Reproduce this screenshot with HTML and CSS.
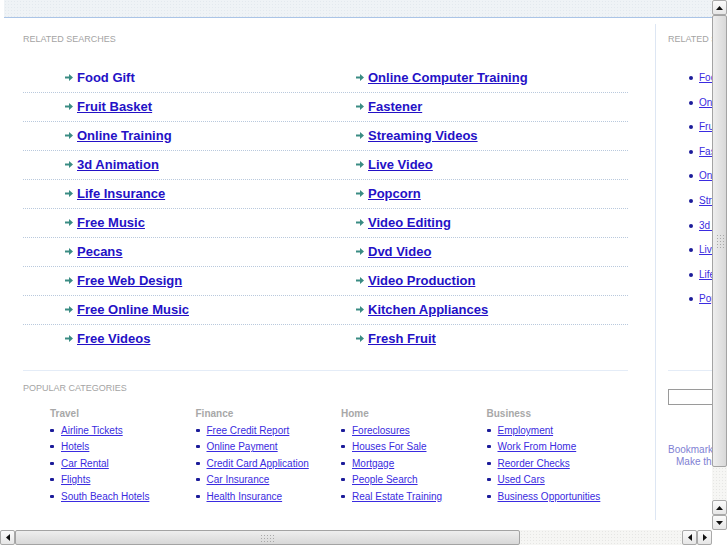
FILE: index.html
```html
<!DOCTYPE html>
<html lang="en">
<head>
    <meta charset="UTF-8">
    <title>Related Searches</title>
    <link rel="stylesheet" href="styles.css">
</head>
<body>
    <div class="window">
        <!-- Area visivel da pagina -->
        <div class="viewport">
            <div class="page">
                <div class="topbar"></div>

                <div class="content">
                    <!-- Coluna principal -->
                    <div class="main">
                        <div class="section-title">RELATED SEARCHES</div>

                        <div class="searches">
                            <div class="search-row">
                                <a class="search-item plain" href="#"><svg class="arrow" viewBox="0 0 8 7"><path d="M0 2.5h4V0l4 3.5L4 7V4.5H0z"/></svg><span>Food Gift</span></a>
                                <a class="search-item" href="#"><svg class="arrow" viewBox="0 0 8 7"><path d="M0 2.5h4V0l4 3.5L4 7V4.5H0z"/></svg><span>Online Computer Training</span></a>
                            </div>
                            <div class="search-row">
                                <a class="search-item" href="#"><svg class="arrow" viewBox="0 0 8 7"><path d="M0 2.5h4V0l4 3.5L4 7V4.5H0z"/></svg><span>Fruit Basket</span></a>
                                <a class="search-item" href="#"><svg class="arrow" viewBox="0 0 8 7"><path d="M0 2.5h4V0l4 3.5L4 7V4.5H0z"/></svg><span>Fastener</span></a>
                            </div>
                            <div class="search-row">
                                <a class="search-item" href="#"><svg class="arrow" viewBox="0 0 8 7"><path d="M0 2.5h4V0l4 3.5L4 7V4.5H0z"/></svg><span>Online Training</span></a>
                                <a class="search-item" href="#"><svg class="arrow" viewBox="0 0 8 7"><path d="M0 2.5h4V0l4 3.5L4 7V4.5H0z"/></svg><span>Streaming Videos</span></a>
                            </div>
                            <div class="search-row">
                                <a class="search-item" href="#"><svg class="arrow" viewBox="0 0 8 7"><path d="M0 2.5h4V0l4 3.5L4 7V4.5H0z"/></svg><span>3d Animation</span></a>
                                <a class="search-item" href="#"><svg class="arrow" viewBox="0 0 8 7"><path d="M0 2.5h4V0l4 3.5L4 7V4.5H0z"/></svg><span>Live Video</span></a>
                            </div>
                            <div class="search-row">
                                <a class="search-item" href="#"><svg class="arrow" viewBox="0 0 8 7"><path d="M0 2.5h4V0l4 3.5L4 7V4.5H0z"/></svg><span>Life Insurance</span></a>
                                <a class="search-item" href="#"><svg class="arrow" viewBox="0 0 8 7"><path d="M0 2.5h4V0l4 3.5L4 7V4.5H0z"/></svg><span>Popcorn</span></a>
                            </div>
                            <div class="search-row">
                                <a class="search-item" href="#"><svg class="arrow" viewBox="0 0 8 7"><path d="M0 2.5h4V0l4 3.5L4 7V4.5H0z"/></svg><span>Free Music</span></a>
                                <a class="search-item" href="#"><svg class="arrow" viewBox="0 0 8 7"><path d="M0 2.5h4V0l4 3.5L4 7V4.5H0z"/></svg><span>Video Editing</span></a>
                            </div>
                            <div class="search-row">
                                <a class="search-item" href="#"><svg class="arrow" viewBox="0 0 8 7"><path d="M0 2.5h4V0l4 3.5L4 7V4.5H0z"/></svg><span>Pecans</span></a>
                                <a class="search-item" href="#"><svg class="arrow" viewBox="0 0 8 7"><path d="M0 2.5h4V0l4 3.5L4 7V4.5H0z"/></svg><span>Dvd Video</span></a>
                            </div>
                            <div class="search-row">
                                <a class="search-item" href="#"><svg class="arrow" viewBox="0 0 8 7"><path d="M0 2.5h4V0l4 3.5L4 7V4.5H0z"/></svg><span>Free Web Design</span></a>
                                <a class="search-item" href="#"><svg class="arrow" viewBox="0 0 8 7"><path d="M0 2.5h4V0l4 3.5L4 7V4.5H0z"/></svg><span>Video Production</span></a>
                            </div>
                            <div class="search-row">
                                <a class="search-item" href="#"><svg class="arrow" viewBox="0 0 8 7"><path d="M0 2.5h4V0l4 3.5L4 7V4.5H0z"/></svg><span>Free Online Music</span></a>
                                <a class="search-item" href="#"><svg class="arrow" viewBox="0 0 8 7"><path d="M0 2.5h4V0l4 3.5L4 7V4.5H0z"/></svg><span>Kitchen Appliances</span></a>
                            </div>
                            <div class="search-row">
                                <a class="search-item" href="#"><svg class="arrow" viewBox="0 0 8 7"><path d="M0 2.5h4V0l4 3.5L4 7V4.5H0z"/></svg><span>Free Videos</span></a>
                                <a class="search-item" href="#"><svg class="arrow" viewBox="0 0 8 7"><path d="M0 2.5h4V0l4 3.5L4 7V4.5H0z"/></svg><span>Fresh Fruit</span></a>
                            </div>
                        </div>

                        <div class="divider"></div>

                        <div class="section-title">POPULAR CATEGORIES</div>

                        <div class="categories">
                            <div class="category">
                                <div class="category-title">Travel</div>
                                <a class="cat-link" href="#">Airline Tickets</a>
                                <a class="cat-link" href="#">Hotels</a>
                                <a class="cat-link" href="#">Car Rental</a>
                                <a class="cat-link" href="#">Flights</a>
                                <a class="cat-link" href="#">South Beach Hotels</a>
                            </div>
                            <div class="category">
                                <div class="category-title">Finance</div>
                                <a class="cat-link" href="#">Free Credit Report</a>
                                <a class="cat-link" href="#">Online Payment</a>
                                <a class="cat-link" href="#">Credit Card Application</a>
                                <a class="cat-link" href="#">Car Insurance</a>
                                <a class="cat-link" href="#">Health Insurance</a>
                            </div>
                            <div class="category">
                                <div class="category-title">Home</div>
                                <a class="cat-link" href="#">Foreclosures</a>
                                <a class="cat-link" href="#">Houses For Sale</a>
                                <a class="cat-link" href="#">Mortgage</a>
                                <a class="cat-link" href="#">People Search</a>
                                <a class="cat-link" href="#">Real Estate Training</a>
                            </div>
                            <div class="category">
                                <div class="category-title">Business</div>
                                <a class="cat-link" href="#">Employment</a>
                                <a class="cat-link" href="#">Work From Home</a>
                                <a class="cat-link" href="#">Reorder Checks</a>
                                <a class="cat-link" href="#">Used Cars</a>
                                <a class="cat-link" href="#">Business Opportunities</a>
                            </div>
                        </div>
                    </div>

                    <!-- Coluna lateral -->
                    <div class="side">
                        <div class="section-title">RELATED SEARCHES</div>
                        <div class="side-list">
                            <a class="side-link" href="#">Food Gift</a>
                            <a class="side-link" href="#">Online Computer Training</a>
                            <a class="side-link" href="#">Fruit Basket</a>
                            <a class="side-link" href="#">Fastener</a>
                            <a class="side-link" href="#">Online Training</a>
                            <a class="side-link" href="#">Streaming Videos</a>
                            <a class="side-link" href="#">3d Animation</a>
                            <a class="side-link" href="#">Live Video</a>
                            <a class="side-link" href="#">Life Insurance</a>
                            <a class="side-link" href="#">Popcorn</a>
                        </div>
                        <div class="side-divider"></div>
                        <input class="search-box" type="text">
                        <div class="side-note">
                            <a href="#">Bookmark this page</a>
                            <a class="indent" href="#">Make this your Homepage</a>
                        </div>
                    </div>
                </div>
            </div>
        </div>

        <!-- Barra de rolagem vertical -->
        <div class="vscroll">
            <div class="sb-btn"><svg viewBox="0 0 7 4"><path d="M0 4L3.5 0L7 4z"/></svg></div>
            <div class="sb-thumb v"><div class="grip"></div></div>
            <div class="sb-track"></div>
            <div class="sb-btn"><svg viewBox="0 0 7 4"><path d="M0 4L3.5 0L7 4z"/></svg></div>
            <div class="sb-btn"><svg viewBox="0 0 7 4"><path d="M0 0L3.5 4L7 0z"/></svg></div>
        </div>

        <!-- Barra de rolagem horizontal -->
        <div class="hscroll">
            <div class="sb-btn"><svg class="tall" viewBox="0 0 4 7"><path d="M4 0L0 3.5L4 7z"/></svg></div>
            <div class="sb-thumb h"><div class="grip"></div></div>
            <div class="sb-track"></div>
            <div class="sb-btn"><svg class="tall" viewBox="0 0 4 7"><path d="M4 0L0 3.5L4 7z"/></svg></div>
            <div class="sb-btn"><svg class="tall" viewBox="0 0 4 7"><path d="M0 0L4 3.5L0 7z"/></svg></div>
        </div>
        <div class="corner"></div>
    </div>
</body>
</html>
```

FILE: styles.css
```css
html, body {
    margin: 0;
    padding: 0;
    width: 727px;
    height: 545px;
    overflow: hidden;
    background: #ffffff;
    font-family: "Liberation Sans", Arial, sans-serif;
}

.window {
    display: grid;
    grid-template-columns: 712px 15px;
    grid-template-rows: 530px 15px;
}

.viewport {
    overflow: hidden;
    background: #ffffff;
}

.page {
    width: 940px;
}

/* Faixa do topo */
.topbar {
    margin-left: 4px;
    height: 17px;
    background-color: #eff3f6;
    background-image: radial-gradient(#e3e9ee 0.6px, transparent 0.8px);
    background-size: 3px 3px;
    border-bottom: 1px solid #aac4e6;
}

.content {
    display: flex;
    align-items: flex-start;
    padding-top: 6px;
}

.main {
    width: 605px;
    padding-left: 23px;
    padding-top: 10px;
}

.section-title {
    font-size: 9px;
    line-height: 11px;
    color: #a4a4a4;
    white-space: nowrap;
}

/* Lista de buscas relacionadas */
.searches {
    margin-top: 19px;
}

.search-row {
    display: grid;
    grid-template-columns: 291px 1fr;
    padding-left: 42px;
    height: 28px;
    border-bottom: 1px dotted #b9c9dd;
}

.search-row:last-child {
    border-bottom: none;
}

.search-item {
    display: flex;
    align-items: center;
    gap: 4px;
    padding-bottom: 2px;
    font-size: 13px;
    font-weight: bold;
    color: #2411c6;
    text-decoration: none;
    white-space: nowrap;
}

.search-item span {
    color: #2411c6;
    text-decoration: underline;
}

.search-item.plain span {
    text-decoration: none;
}

.arrow {
    width: 8px;
    height: 7px;
    fill: #3a8c83;
}

.divider {
    margin-top: 17px;
    border-top: 1px solid #e4ecf7;
    margin-bottom: 12px;
}

/* Categorias populares */
.categories {
    display: grid;
    grid-template-columns: repeat(4, 145.5px);
    padding-left: 27px;
    margin-top: 13px;
}

.category {
    display: flex;
    flex-direction: column;
}

.category-title {
    font-size: 10px;
    font-weight: bold;
    line-height: 14px;
    color: #a8a8a8;
    margin-bottom: 2px;
}

.cat-link {
    font-size: 10px;
    line-height: 16.4px;
    color: #3a2be0;
    white-space: nowrap;
}

.cat-link::before {
    content: "";
    display: inline-block;
    width: 4px;
    height: 3px;
    margin-right: 7px;
    vertical-align: 2px;
    background: #1c1c9a;
    border-radius: 1px;
}

/* Coluna lateral */
.side {
    margin-left: 27px;
    width: 240px;
    min-height: 496px;
    border-left: 1px solid #dde6f3;
    padding-left: 12px;
    padding-top: 10px;
    box-sizing: border-box;
}

.side-list {
    display: flex;
    flex-direction: column;
    margin-top: 21px;
    padding-left: 21px;
}

.side-link {
    font-size: 10px;
    line-height: 24.6px;
    color: #3a2be0;
    white-space: nowrap;
}

.side-link::before {
    content: "";
    display: inline-block;
    width: 4px;
    height: 4px;
    margin-right: 6px;
    vertical-align: 1px;
    background: #1c1c9a;
    border-radius: 2px;
}

.side-divider {
    margin-top: 58px;
    border-top: 1px solid #e4ecf7;
}

.search-box {
    display: block;
    margin: 18px 0 0 0;
    width: 160px;
    height: 16px;
    box-sizing: border-box;
    border: 1px solid #9a9a9a;
    padding: 0;
}

.side-note {
    display: flex;
    flex-direction: column;
    margin-top: 39px;
}

.side-note a {
    font-size: 10px;
    line-height: 12px;
    color: #7f7fd4;
    text-decoration: none;
    white-space: nowrap;
}

.side-note .indent {
    padding-left: 8px;
}

/* Barras de rolagem */
.vscroll {
    display: flex;
    flex-direction: column;
    background: #f4f4f2;
}

.hscroll {
    display: flex;
    background: #f4f4f2;
}

.corner {
    background: #ffffff;
}

.sb-btn {
    flex: none;
    width: 15px;
    height: 15px;
    box-sizing: border-box;
    border: 1px solid #a9a9a9;
    border-radius: 2px;
    background: linear-gradient(#fbfbfb, #e6e6e6);
    display: flex;
    align-items: center;
    justify-content: center;
}

.sb-btn svg {
    width: 7px;
    height: 4px;
    fill: #111111;
}

.sb-btn svg.tall {
    width: 4px;
    height: 7px;
}

.sb-thumb {
    box-sizing: border-box;
    border: 1px solid #a3a3a3;
    border-radius: 2px;
    display: flex;
    align-items: center;
    justify-content: center;
}

.sb-thumb.v {
    height: 452px;
    background: linear-gradient(90deg, #eeeeee, #d8d8d8);
}

.sb-thumb.h {
    width: 505px;
    background: linear-gradient(#eeeeee, #d8d8d8);
}

.sb-track {
    flex: 1;
    background-color: #f6f6f4;
    background-image: radial-gradient(#e6e6e4 0.6px, transparent 0.8px);
    background-size: 3px 3px;
}

.grip {
    width: 8px;
    height: 15px;
    background-image: radial-gradient(#a8a8a8 0.7px, transparent 0.9px);
    background-size: 3px 3px;
}

.sb-thumb.h .grip {
    width: 15px;
    height: 8px;
}
```
